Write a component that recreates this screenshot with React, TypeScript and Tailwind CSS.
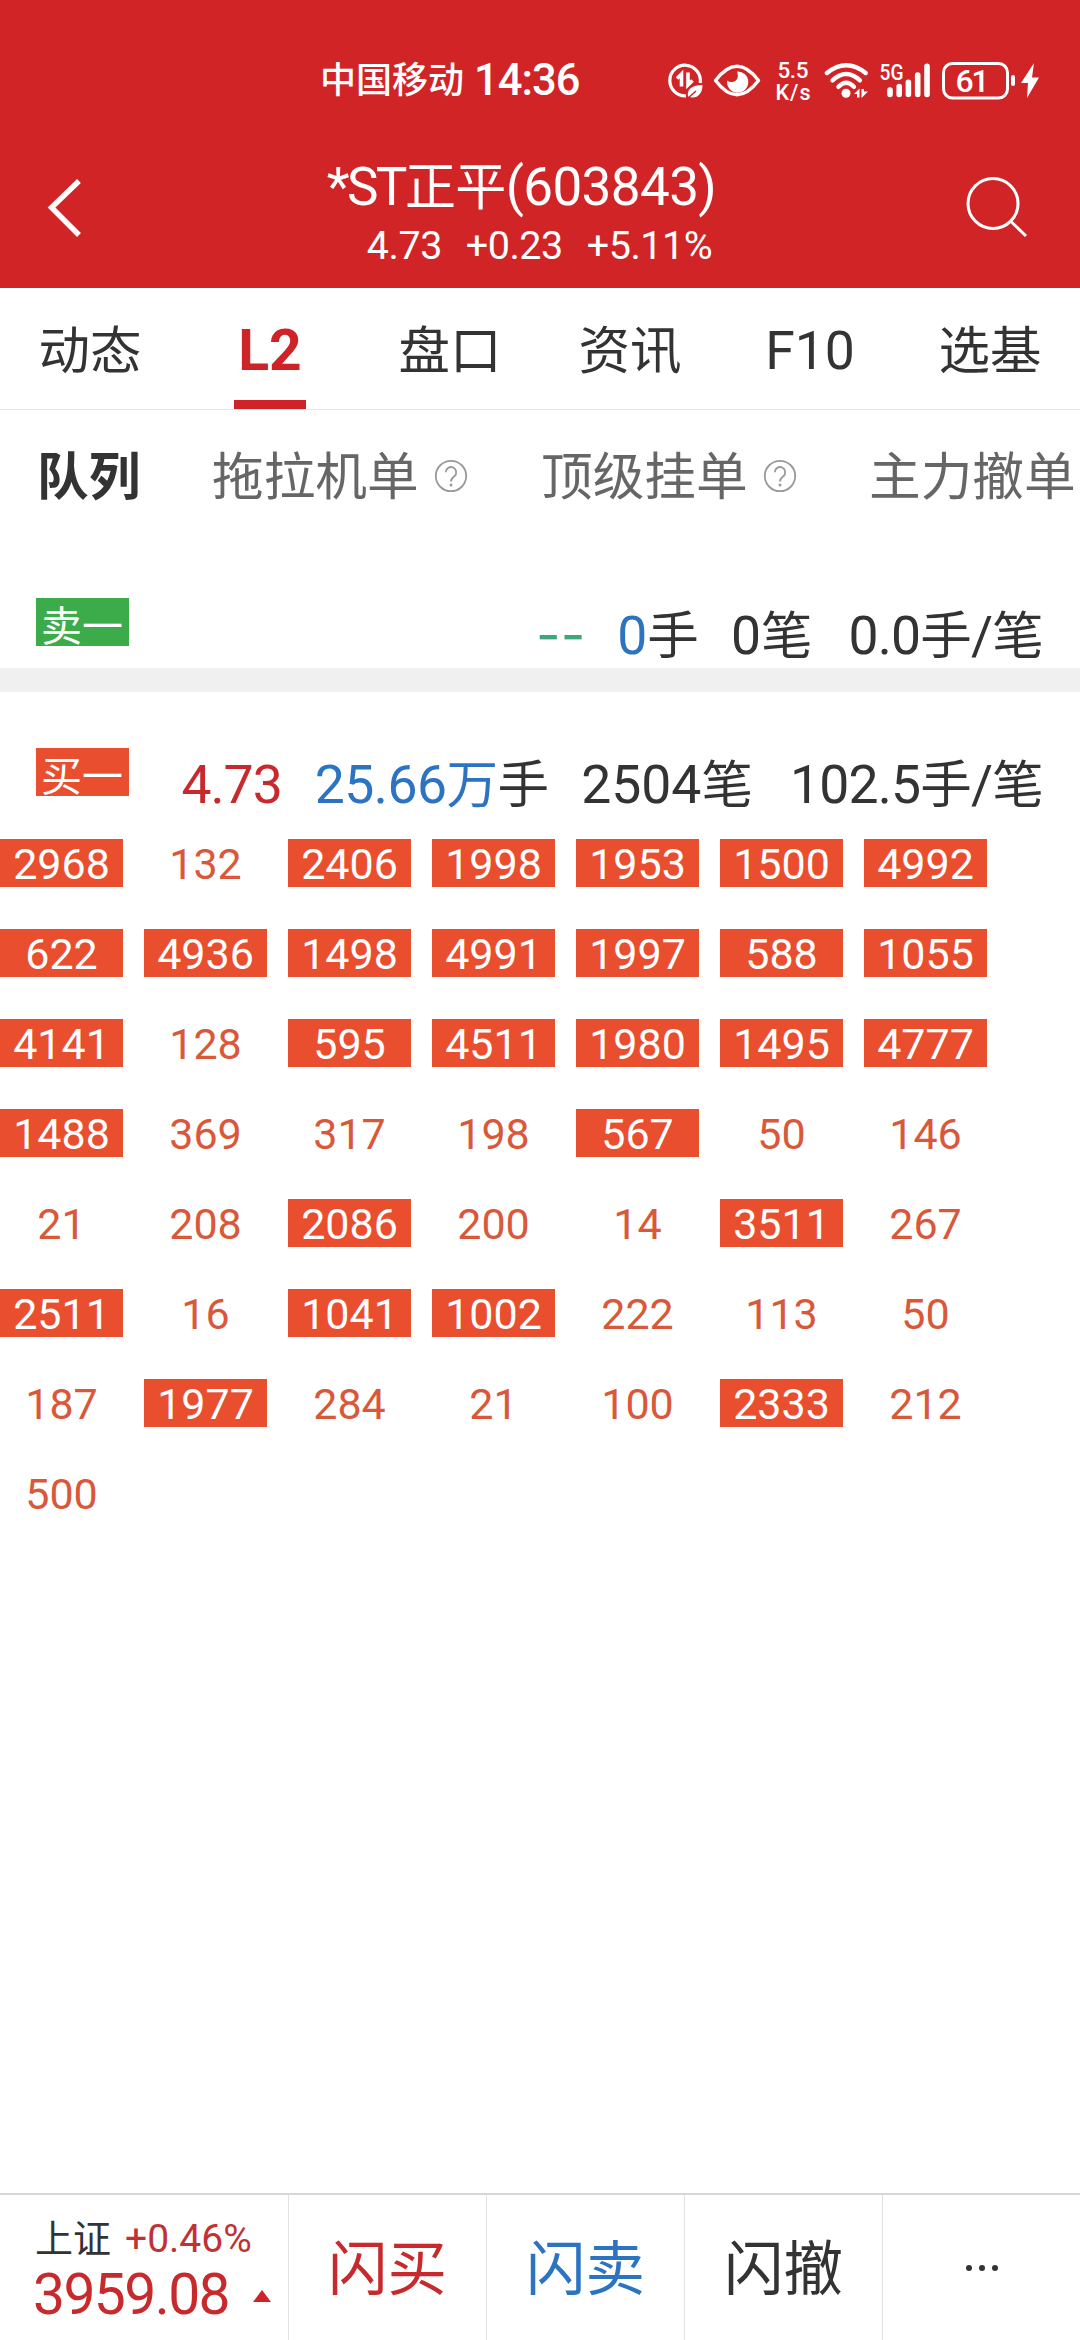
import type { ReactNode } from "react";

const tabs = ["动态", "L2", "盘口", "资讯", "F10", "选基"];

const orders = [
  2968, 132, 2406, 1998, 1953, 1500, 4992,
  622, 4936, 1498, 4991, 1997, 588, 1055,
  4141, 128, 595, 4511, 1980, 1495, 4777,
  1488, 369, 317, 198, 567, 50, 146,
  21, 208, 2086, 200, 14, 3511, 267,
  2511, 16, 1041, 1002, 222, 113, 50,
  187, 1977, 284, 21, 100, 2333, 212,
  500,
];

// Orders above this many lots are highlighted
const BIG_ORDER = 500;

function StatusIcons() {
  return (
    <svg className="block" width="380" height="50" viewBox="660 55 380 50" fill="none" stroke="#fff">
      {/* data saver */}
      <path d="M686 95.8A15.3 15.3 0 1 1 700.2 83" strokeWidth="3.2" />
      <path d="M677 78.500l4.500-4.500v12.500M688 72.500v12.500l4.500-4.500" strokeWidth="3.6" />
      <path d="M702.500 85c-10 0-16 4-14.500 11.500 8 3.500 14.500-2 14.500-11.500z" fill="#fff" stroke="none" />
      <path d="M687 99l9-8" stroke="#d12426" strokeWidth="1.5" />
      {/* eye */}
      <path d="M715.500 80.500Q737 52 758.500 80.500Q737 109 715.500 80.500z" strokeWidth="3.4" strokeLinejoin="round" />
      <path d="M737 71.500a10.600 10.600 0 1 1-9.800 9c4 3.300 9.700 1.200 10.500-3.200.4-2.300-.2-4.300-.7-5.800z" fill="#fff" stroke="none" />
      {/* wifi */}
      <g strokeWidth="4.4" strokeLinecap="round">
        <path d="M827 73q19.300-15.500 38.600 0" />
        <path d="M832.500 80.300q13.700-12.600 27.400 0" />
        <path d="M838.500 86.800q7.700-8 15.400 0" />
      </g>
      <circle cx="846" cy="93.2" r="4.5" fill="#fff" stroke="none" />
      <path d="M854 94l5.500-5.500v9h-2.500v-3.500zM868 91.500l-6.500 6.500v-9h2.500v2.500z" fill="#fff" stroke="none" />
      {/* signal */}
      <path d="M890 90v4.500M899.200 86.500v8M908.400 82.300v12.200M917.700 75v19.500M927 66.300v28.200" strokeWidth="5.6" strokeLinecap="round" />
      {/* battery */}
      <rect x="943.500" y="63.500" width="64" height="34.500" rx="9" strokeWidth="3" />
      <path d="M1013 77v7" strokeWidth="4" strokeLinecap="round" />
      <path d="M1034 63l-13 20h7l-1 15 12-20.500h-7z" fill="#fff" stroke="none" />
      <g fill="#fff" stroke="none" fontFamily="Roboto, sans-serif" fontWeight="500">
        <text x="777.500" y="78.300" fontSize="22.500" textLength="31">5.5</text>
        <text x="775.500" y="100" fontSize="21.500" textLength="35">K/s</text>
        <text x="879.500" y="80.300" fontSize="22" textLength="24" lengthAdjust="spacingAndGlyphs">5G</text>
        <text x="955.500" y="92" fontSize="32" textLength="34">61</text>
      </g>
    </svg>
  );
}

function Help() {
  return (
    <svg className="mb-1 ml-[15px] block" width="34" height="34" viewBox="0 0 34 34" fill="none" stroke="#999" strokeWidth="1.8">
      <circle cx="17" cy="17" r="15.200" />
      <path d="M11.800 13.200a5.200 5.200 0 1 1 8.600 4c-2 1.500-3.400 2.500-3.400 5.300" />
      <circle cx="17" cy="26" r="1.500" fill="#999" stroke="none" />
    </svg>
  );
}

function Cn({ children }: { children: ReactNode }) {
  return <span className="text-[51.5px]">{children}</span>;
}

function LevelRow({ label, color, children }: { label: string; color: string; children: ReactNode }) {
  return (
    <div className="flex h-[70px] justify-between pr-[37px] pl-9 text-[53.5px] leading-[73px] text-[#333]">
      <div className={`h-12 w-[93px] pl-[5px] text-[41px] leading-[58px] whitespace-nowrap text-white ${color}`}>{label}</div>
      <div className="flex h-[70px] items-baseline whitespace-nowrap">{children}</div>
    </div>
  );
}

export default function App() {
  return (
    <div className="flex h-[2340px] w-[1080px] flex-col overflow-hidden bg-white font-[Roboto,'Noto_Sans_CJK_SC',sans-serif]">
      <header className="h-72 bg-[#d12426] text-white">
        <div className="flex h-[105px] items-end justify-between pr-10 pl-[320px]">
          <div className="flex h-[48px] items-center gap-[10px] font-medium">
            <span className="text-[36px] leading-[48px]">中国移动</span>
            <span className="text-[43.5px] leading-[48px] tracking-[-1px]">14:36</span>
          </div>
          <StatusIcons />
        </div>
        <div className="flex h-[183px] items-start justify-between">
          <svg className="mt-[66px] ml-10 block" width="60" height="72" viewBox="39 171 60 72" fill="none" stroke="#fff" strokeWidth="5.4">
            <path d="M78 181L50.500 207.500L78 235" />
          </svg>
          <div className="flex flex-col items-center pt-[51px] pr-[21px]">
            <div className="text-[53px] leading-[62px] tracking-[-0.6px] whitespace-nowrap">
              <span className="tracking-[-2.6px]">*ST</span>
              <span className="text-[51px]">正平</span>(603843)
            </div>
            <div className="flex gap-6 pl-9 text-[39.5px] leading-[54px] tracking-[-0.5px]">
              <span>4.73</span>
              <span>+0.23</span>
              <span>+5.11%</span>
            </div>
          </div>
          <svg className="mt-[66px] mr-11 block" width="72" height="72" viewBox="964 171 72 72" fill="none" stroke="#fff" strokeWidth="3">
            <circle cx="993" cy="203.500" r="25" />
            <path d="M1011.500 222L1026 236" />
          </svg>
        </div>
      </header>

      <nav className="flex h-[122px] border-b border-[#e5e5e5] text-[51.5px] text-[#333]">
        {tabs.map((tab) => (
          <div key={tab} className="flex w-[180px] flex-col items-center justify-between">
            {tab === "L2" ? (
              <>
                <span className="h-[112px] pt-[7px] text-[57px] leading-[112px] font-bold text-[#cf2427]">{tab}</span>
                <i className="block h-[9px] w-[72px] bg-[#cf2427]" />
              </>
            ) : (
              <span className={tab === "F10" ? "h-[121px] text-[53.5px] leading-[126px]" : "h-[121px] leading-[127px]"}>{tab}</span>
            )}
          </div>
        ))}
      </nav>

      <div className="flex h-[188px] items-start pl-[37px] text-[51.7px] leading-[136px] whitespace-nowrap text-[#666]">
        <span className="w-[175px] font-bold text-[#333]">队列</span>
        <span className="flex w-[329px] items-center">拖拉机单<Help /></span>
        <span className="flex w-[328px] items-center">顶级挂单<Help /></span>
        <span>主力撤单</span>
      </div>

      <LevelRow label="卖一" color="bg-[#3cab4a]">
        <span className="mr-8 font-[Inter] text-[#3da77a]">--</span>
        <span className="text-[#2c74c1]">0</span>
        <Cn>手</Cn>
        <span className="ml-8">0<Cn>笔</Cn></span>
        <span className="ml-9 tracking-[-0.8px]">0.0<Cn>手</Cn>/<Cn>笔</Cn></span>
      </LevelRow>
      <div className="mb-14 h-6 bg-[#f0f0f0]" />
      <LevelRow label="买一" color="bg-[#e94e2f]">
        <span className="mr-[33px] tracking-[-1px] text-[#c8292c]">4.73</span>
        <span className="tracking-[-0.5px] text-[#2c74c1]">25.66<Cn>万</Cn></span>
        <Cn>手</Cn>
        <span className="ml-8">2504<Cn>笔</Cn></span>
        <span className="ml-[37px] tracking-[-0.8px]">102.5<Cn>手</Cn>/<Cn>笔</Cn></span>
      </LevelRow>

      <div className="mt-[21px] grid grid-cols-[repeat(7,123px)] gap-x-[21px] gap-y-[42px]">
        {orders.map((n, i) => (
          <div
            key={i}
            className={`h-12 text-center text-[43px] leading-[50px] ${n > BIG_ORDER ? "bg-[#e94e2f] text-white" : "text-[#d9583a]"}`}
          >
            {n}
          </div>
        ))}
      </div>

      <footer className="mt-auto flex h-[147px] border-t-2 border-[#d6d6d6] text-[59.5px] leading-[150px]">
        <div className="flex w-[289px] flex-col border-r border-[#e2e2e2] pt-[18px] pl-[35px]">
          <div className="flex items-baseline gap-[14px] text-[39px] leading-[53px] text-[#333]">
            <span className="text-[38px]">上证</span>
            <span className="text-[#c03236]">+0.46%</span>
          </div>
          <div className="-ml-[2px] flex items-center text-[57px] leading-[58px] tracking-[-1.6px] text-[#c8292c]">
            3959.08
            <svg className="mt-[2px] ml-6 block" width="18" height="12" viewBox="0 0 18 12" fill="#cf2427">
              <path d="M9 0l9 12H0z" />
            </svg>
          </div>
        </div>
        <div className="w-[198px] border-r border-[#e2e2e2] text-center text-[#c8292c]">闪买</div>
        <div className="w-[198px] border-r border-[#e2e2e2] text-center text-[#2c74c1]">闪卖</div>
        <div className="w-[198px] border-r border-[#e2e2e2] text-center text-[#333]">闪撤</div>
        <div className="flex flex-1 items-center justify-center gap-[7px]">
          <i className="size-[6px] rounded-full bg-[#333]" />
          <i className="size-[6px] rounded-full bg-[#333]" />
          <i className="size-[6px] rounded-full bg-[#333]" />
        </div>
      </footer>
    </div>
  );
}
